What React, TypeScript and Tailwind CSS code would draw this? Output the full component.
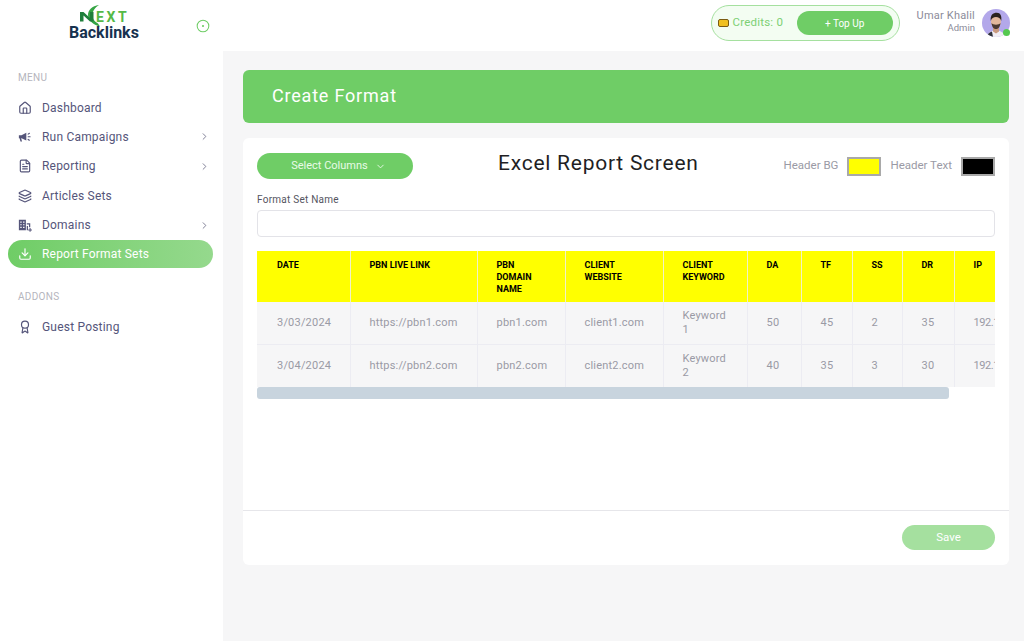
import React from 'react';
import { Award, ChevronDown, ChevronRight, CircleDot, Download, FileText, Home, Layers } from 'lucide-react';

function MegaphoneIcon({ className }: { className?: string }) {
  return (
    <svg viewBox="0 0 16 16" className={className} fill="currentColor">
      <path d="M1 6 H4 L9.5 3 V12 L4 9.5 H3.6 L4.6 13 H2.8 L1.8 9.5 H1 Z" />
      <rect x="11" y="7" width="3.5" height="1.4" rx="0.7" />
      <rect x="10.8" y="3.6" width="3" height="1.3" rx="0.65" transform="rotate(-35 12.3 4.2)" />
      <rect x="10.8" y="10.6" width="3" height="1.3" rx="0.65" transform="rotate(35 12.3 11.2)" />
    </svg>
  );
}

function DomainIcon({ className }: { className?: string }) {
  return (
    <svg viewBox="0 0 16 16" className={className} fill="currentColor">
      <path fillRule="evenodd" d="M1 2 H9 V14 H1 Z M2.6 4 V5.4 H4.2 V4 Z M5.8 4 V5.4 H7.4 V4 Z M2.6 7 V8.4 H4.2 V7 Z M5.8 7 V8.4 H7.4 V7 Z M2.6 10 V11.4 H4.2 V10 Z M5.8 10 V11.4 H7.4 V10 Z" />
      <path d="M10 6 H14 V10.5 H12.6 V7.4 H10 Z M10 9 H11.4 V14 H10 Z" />
      <path d="M13.2 11.5 H14.4 V13 H15.9 V14.2 H14.4 V15.7 H13.2 V14.2 H11.7 V13 H13.2 Z" />
    </svg>
  );
}

const menu = [
  { label: 'Dashboard', icon: Home },
  { label: 'Run Campaigns', icon: MegaphoneIcon, arrow: true },
  { label: 'Reporting', icon: FileText, arrow: true },
  { label: 'Articles Sets', icon: Layers },
  { label: 'Domains', icon: DomainIcon, arrow: true },
  { label: 'Report Format Sets', icon: Download, active: true },
];

const columns = [
  { title: 'DATE', width: 93 },
  { title: 'PBN LIVE LINK', width: 127 },
  { title: 'PBN DOMAIN NAME', width: 88 },
  { title: 'CLIENT WEBSITE', width: 98 },
  { title: 'CLIENT KEYWORD', width: 84 },
  { title: 'DA', width: 54 },
  { title: 'TF', width: 51 },
  { title: 'SS', width: 50 },
  { title: 'DR', width: 52 },
  { title: 'IP', width: 90 },
];

const rows = [
  ['3/03/2024', 'https://pbn1.com', 'pbn1.com', 'client1.com', 'Keyword 1', '50', '45', '2', '35', '192.168.1.1'],
  ['3/04/2024', 'https://pbn2.com', 'pbn2.com', 'client2.com', 'Keyword 2', '40', '35', '3', '30', '192.168.1.2'],
];

function Logo() {
  return (
    <div className="relative h-[42px] w-[74px] self-start">
      <svg viewBox="0 0 74 42" className="absolute left-0 top-0 h-[42px] w-[74px]">
        <path d="M31 5 C24 6 20 10 20 15 C20 20 25 25 32 26.5 L30 23.5 C27 22 24.5 19 24.5 15.5 C24.5 11 27 7.5 31 5 Z" fill="#35a544" />
        <path d="M12 21.5 V12 H15.5 L22 18 V12 H25.5 V21.5 H22 L15.5 15.5 V21.5 Z" fill="#1f7f3b" />
      </svg>
      <span className="absolute left-[28px] top-[9.5px] text-[14px] font-bold leading-[14px] tracking-[2.6px] text-[#55b947]">EXT</span>
      <span className="absolute left-[1px] top-[24px] text-[16px] font-bold leading-[18px] text-[#17324f]">Backlinks</span>
    </div>
  );
}

function Avatar() {
  return (
    <div className="relative h-7 w-7">
      <svg viewBox="0 0 28 28" className="h-7 w-7 rounded-full">
        <rect width="28" height="28" fill="#b3a8ea" />
        <path d="M5 28 C6 23 10 21.5 14 21.5 C18 21.5 22 23 23 28 Z" fill="#f1eef5" />
        <path d="M5 28 C5.5 25 7.5 23 10 22.5 L11 28 Z" fill="#30323c" />
        <path d="M11 17 H17 V22.5 L14 24.5 L11 22.5 Z" fill="#c99a80" />
        <ellipse cx="14" cy="12.5" rx="5" ry="6.5" fill="#e2b79c" />
        <path d="M8.8 12 C8 6 11 3.8 14.8 3.8 C18.5 3.8 20 7 19.2 12 C18.4 9 16.5 8 14 8 C11.5 8 9.6 9 8.8 12 Z" fill="#2a211e" />
        <path d="M9.5 14 C10 18.5 12 20 14 20 C16 20 18 18.5 18.5 14 C17 16.2 11 16.2 9.5 14 Z" fill="#4b3a33" />
      </svg>
      <span className="absolute bottom-[1px] right-0 h-[7px] w-[7px] rounded-full bg-[#55c94f]" />
    </div>
  );
}

export default function App() {
  return (
    <div className="flex h-[641px] w-[1024px] overflow-hidden bg-[#f6f6f7] font-['Roboto',sans-serif]">
      {/* Sidebar */}
      <aside className="flex w-[223px] shrink-0 flex-col bg-white">
        <div className="flex h-[51px] items-center pl-[68px] pr-[13px]">
          <Logo />
          <CircleDot className="ml-auto h-[14px] w-[14px] text-[#6fcd66]" strokeWidth={1.75} />
        </div>
        <p className="mt-[21px] pl-[18px] text-[10px] leading-[12px] tracking-[0.3px] text-[#b5b5bd]">MENU</p>
        <nav className="mt-[9.5px] flex flex-col gap-[1.4px] pl-[8px] pr-[10px]">
          {menu.map((item) => (
            <div
              key={item.label}
              className={`flex h-[28px] items-center rounded-full pl-[10px] pr-[3px] ${
                item.active ? 'bg-gradient-to-r from-[#6fcd66] to-[#95d98d] text-white' : 'text-[#55557a]'
              }`}
            >
              <item.icon className="h-[14px] w-[14px] shrink-0" strokeWidth={2} />
              <span className="ml-[10px] text-[12px] tracking-[0.2px]">{item.label}</span>
              {item.arrow && <ChevronRight className="ml-auto h-[11px] w-[11px] text-[#77778f]" strokeWidth={2} />}
            </div>
          ))}
        </nav>
        <p className="mt-[23px] pl-[18px] text-[10px] leading-[12px] tracking-[0.3px] text-[#b5b5bd]">ADDONS</p>
        <div className="mt-[10px] flex h-[28px] items-center pl-[18px] text-[#55557a]">
          <Award className="h-[14px] w-[14px]" strokeWidth={2} />
          <span className="ml-[10px] text-[12px] tracking-[0.2px]">Guest Posting</span>
        </div>
      </aside>

      <div className="flex min-w-0 flex-1 flex-col">
        {/* Top bar */}
        <header className="flex h-[51px] shrink-0 items-start justify-end bg-white pr-[14px] pt-[5px]">
          <div className="flex h-[36px] w-[189px] items-center rounded-full border border-[#a5e09f] bg-[#f3fdf2] pl-[6px] pr-[6px]">
            <span className="h-[8px] w-[11px] rounded-[2px] border border-[#7a5a12] bg-[#f0c020]" />
            <span className="ml-[4px] text-[11.5px] tracking-[0.2px] text-[#7dd075]">Credits: 0</span>
            <button className="ml-auto h-[24px] w-[96px] rounded-full bg-[#6fcd66] text-[10px] text-white">+ Top Up</button>
          </div>
          <div className="ml-[17px] mt-[4px] flex items-start">
            <div className="text-right">
              <p className="text-[11px] leading-[14px] tracking-[0.2px] text-[#8b8b99]">Umar Khalil</p>
              <p className="text-[9.5px] leading-[10px] text-[#8b8b99]">Admin</p>
            </div>
            <div className="ml-[7px]">
              <Avatar />
            </div>
          </div>
        </header>

        <main className="flex flex-col pl-[20px] pr-[15px] pt-[19px]">
          <div className="flex h-[53px] items-center rounded-[6px] bg-[#6fcd66] pb-[2px] pl-[29px]">
            <h1 className="text-[18px] tracking-[0.8px] text-white">Create Format</h1>
          </div>

          <section className="mt-[15px] flex h-[427px] flex-col rounded-[6px] bg-white">
            <div className="flex-1 px-[14px] pt-[15px]">
              <div className="flex items-center justify-between">
                <button className="flex h-[26px] w-[156px] items-center justify-center rounded-full bg-[#6fcd66] pl-[7px] text-[11px] text-[#e9fbe7]">
                  Select Columns
                  <ChevronDown className="ml-[7px] h-[11px] w-[11px]" />
                </button>
                <h2 className="h-[26px] w-[200px] whitespace-nowrap text-center text-[21px] leading-[20px] tracking-[0.75px] text-[#1f1f24]">Excel Report Screen</h2>
                <div className="flex w-[212px] items-center justify-end whitespace-nowrap text-[11.5px] text-[#9a9aa5]">
                  <span>Header BG</span>
                  <span className="ml-[9px] h-[19px] w-[34px] border-2 border-[#a9a9a9] bg-[#ffff00]" />
                  <span className="ml-[9px]">Header Text</span>
                  <span className="ml-[9px] h-[19px] w-[34px] border-2 border-[#a9a9a9] bg-black" />
                </div>
              </div>

              <label className="mt-[15px] block text-[10px] leading-[12px] tracking-[0.25px] text-[#55555f]">Format Set Name</label>
              <input className="mt-[4px] block h-[27px] w-full rounded-[4px] border border-[#e3e3e8] bg-white" />

              <div className="mt-[14px] h-[136px] w-[738px] overflow-hidden">
                <table className="w-[787px] table-fixed border-collapse">
                  <colgroup>
                    {columns.map((col) => (
                      <col key={col.title} style={{ width: col.width }} />
                    ))}
                  </colgroup>
                  <thead>
                    <tr className="h-[51px] bg-[#ffff00]">
                      {columns.map((col, j) => (
                        <th
                          key={col.title}
                          className={`border-r border-[#f1f1c8] pr-[18px] pt-[8px] text-left align-top text-[9px] font-bold leading-[12px] text-black ${
                            j === 0 ? 'pl-[20px]' : 'pl-[19px]'
                          }`}
                        >
                          {col.title}
                        </th>
                      ))}
                    </tr>
                  </thead>
                  <tbody>
                    {rows.map((row, i) => (
                      <tr key={i} className="h-[42.5px] border-b border-[#ececf2] bg-[#f6f6f7]">
                        {row.map((cell, j) => (
                          <td
                            key={j}
                            className={`overflow-hidden border-r border-[#ececf2] pr-[12px] text-[11px] leading-[14px] text-[#9a9aa5] ${
                              j === 0 ? 'pl-[20px]' : 'pl-[19px]'
                            } ${j === 9 ? 'whitespace-nowrap tracking-[-0.4px]' : 'tracking-[0.2px]'}`}
                          >
                            {cell}
                          </td>
                        ))}
                      </tr>
                    ))}
                  </tbody>
                </table>
              </div>
              <div className="h-[12px] w-[692px] rounded-[3px] bg-[#c8d4de]" />
            </div>

            <div className="flex h-[55px] items-start justify-end border-t border-[#e6e6ea] px-[14px] pt-[14px]">
              <button className="h-[25px] w-[93px] rounded-full bg-[#a5e09f] text-[11.5px] text-white">Save</button>
            </div>
          </section>
        </main>
      </div>
    </div>
  );
}
